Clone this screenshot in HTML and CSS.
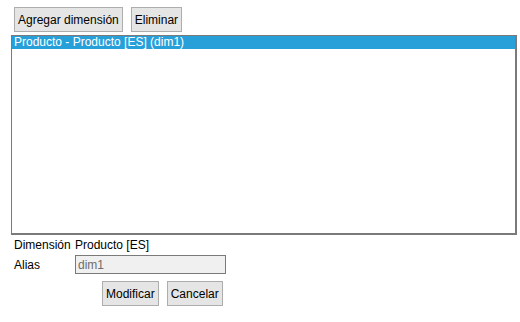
FILE: index.html
```html
<!DOCTYPE html>
<html>
<head>
    <meta charset="utf-8">
    <title>Dimensiones</title>
    <link rel="stylesheet" href="styles.css">
</head>
<body>
    <div class="barra">
        <button class="boton">Agregar dimensión</button>
        <button class="boton">Eliminar</button>
    </div>
    <div class="lista">
        <div class="fila seleccionada">Producto - Producto [ES] (dim1)</div>
    </div>
    <div class="detalle">
        <div class="campo">
            <span class="etiqueta">Dimensión</span>
            <span class="valor">Producto [ES]</span>
        </div>
        <div class="campo">
            <span class="etiqueta">Alias</span>
            <input class="entrada" type="text" value="dim1" disabled>
        </div>
        <div class="acciones">
            <button class="boton">Modificar</button>
            <button class="boton">Cancelar</button>
        </div>
    </div>
</body>
</html>
```

FILE: styles.css
```css
body {
    margin: 0;
    background: #fff;
    color: #000;
    font-family: "Liberation Sans", Arial, sans-serif;
    font-size: 12px;
}

.barra {
    display: flex;
    gap: 8px;
    padding: 7px 0 0 14px;
}

.boton {
    height: 25px;
    padding: 0 3px;
    border: 1px solid #adadad;
    background: #e5e5e5;
    color: #000;
    font-family: inherit;
    font-size: 12px;
}

.lista {
    margin: 3px 3px 0 11px;
    height: 197px;
    border: 1px solid #7a7a7a;
    border-right-width: 2px;
    border-bottom-width: 2px;
}

.fila {
    height: 13px;
    line-height: 13px;
    padding-left: 2px;
}

.seleccionada {
    background: #27a0da;
    color: #fff;
}

.detalle {
    padding: 3px 0 0 14px;
}

.campo {
    display: flex;
    align-items: center;
}

.campo + .campo {
    margin-top: 3px;
}

.etiqueta {
    flex-shrink: 0;
    width: 61px;
}

.entrada {
    box-sizing: border-box;
    width: 151px;
    height: 19px;
    margin: 0;
    padding: 0 2px;
    border: 1px solid #7a7a7a;
    background: #f0f0f0;
    color: #6d6d6d;
    font-family: inherit;
    font-size: 12px;
}

.acciones {
    display: flex;
    gap: 8px;
    padding: 7px 0 0 88px;
}
```
